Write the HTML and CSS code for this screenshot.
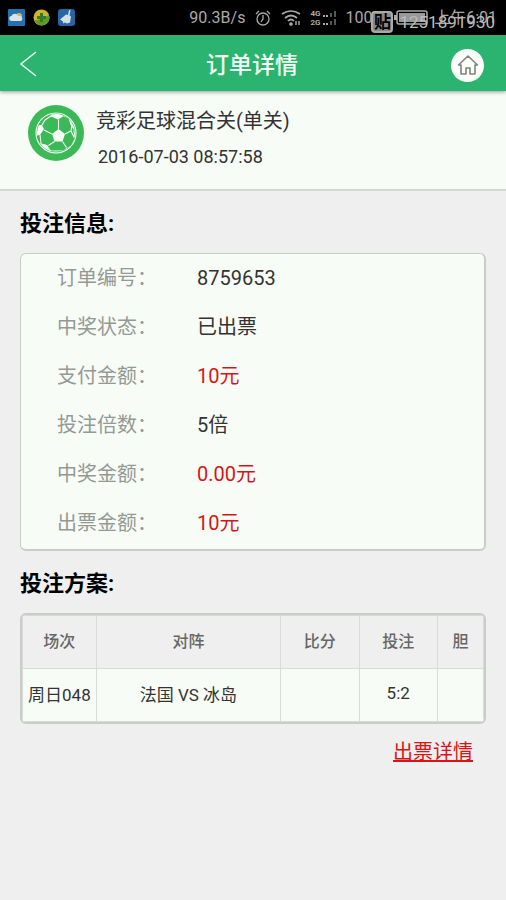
FILE: index.html
```html
<!DOCTYPE html>
<html lang="zh-CN">
<head>
<meta charset="utf-8">
<meta name="viewport" content="width=device-width, initial-scale=1">
<title>订单详情</title>
<link rel="stylesheet" href="styles.css">
</head>
<body>
<div class="status">
  <div class="status-apps">
    <svg width="17" height="17" viewBox="0 0 17 17" aria-hidden="true"><rect width="17" height="17" rx="1" fill="#2472ad"/><circle cx="11" cy="7" r="3" fill="#dfb34c"/><path d="M4 12a2.5 2.5 0 0 1-.5-5C5 4 9 4 10 7c3-.5 5 1 4 4l-1 1z" fill="#d9e3e8"/></svg>
    <svg width="17" height="17" viewBox="0 0 17 17" aria-hidden="true"><circle cx="8.5" cy="8.5" r="8" fill="#d0b52c"/><path d="M1 11C5 12 12 8 16 6a8 8 0 0 1-12 9z" fill="#5d9b31"/><path d="M7 4h3v3h3v3h-3v3H7v-3H4V7h3z" fill="#347b22"/></svg>
    <svg width="17" height="17" viewBox="0 0 17 17" aria-hidden="true"><rect width="17" height="17" rx="3" fill="#2865a4"/><path d="M11 1l1.500.500-1 5 1.500 1-1 6-3 1-2-1-2 1 0-2-3-2 6-5 2 .5z" fill="#d3e0e8"/></svg>
  </div>
  <div class="status-info">
    <span class="speed">90.3B/s</span>
    <svg class="alarm" width="16" height="18" viewBox="0 0 16 18" fill="none" stroke="#aaa" stroke-width="1.3" aria-hidden="true"><circle cx="8" cy="10" r="6"/><path d="M8 6v4l-2 3M1 5l3-3M15 5l-3-3"/></svg>
    <svg class="wifi" width="21" height="18" viewBox="0 0 21 18" fill="none" stroke="#aaa" stroke-width="1.7" aria-hidden="true"><path d="M1 5q9-6 18 0M4 9q6-5 12 0M7 12q3-3 6 0"/><circle cx="10" cy="15" r="1" fill="#aaa"/><path d="M15 12v4M18 12v4" stroke-width="1.4"/></svg>
    <span class="signal"><span class="nets"><b>4G</b><b>2G</b></span>
    <svg width="15" height="18" viewBox="0 0 15 18" aria-hidden="true"><path d="M1 6h2v2H1zM4 6h2v2H4zM1 14h2v2H1zM4 14h2v2H4z" fill="#aaa"/><path d="M8 4h2v4H8zM12 2h2v6h-2zM8 12h2v4H8zM12 10h2v6h-2z" fill="#555"/></svg></span>
    <span class="charge">100%</span>
    <svg class="battery" width="34" height="15" viewBox="0 0 34 15" aria-hidden="true"><rect x="3" y="1" width="30" height="13" rx="2" fill="none" stroke="#aaa" stroke-width="1.5"/><rect x="5" y="3" width="26" height="9" fill="#999"/><path d="M0 5h3v5H0z" fill="#aaa"/></svg>
    <span class="clock">上午6:01</span>
  </div>
  <div class="mark"><span class="mark-badge">贴</span><span class="mark-id">1251891930</span></div>
</div>
<header class="bar">
  <button class="bar-button" type="button" aria-label="返回"><svg width="18" height="28" viewBox="0 0 18 28" fill="none" stroke="#eafff0" stroke-width="1.6" aria-hidden="true"><path d="M16 1L1 13 16 25"/></svg></button>
  <h1 class="bar-title">订单详情</h1>
  <a class="home" href="#" aria-label="首页"><svg width="22" height="22" viewBox="0 0 22 22" fill="none" stroke="#858080" stroke-width="1.6" stroke-linejoin="round" aria-hidden="true"><path d="M4 11H1.500L11 2l9.500 9H18v9h-5v-6H9v6H4z"/></svg></a>
</header>
<section class="game">
  <svg class="ball" width="56" height="56" viewBox="0 0 56 56" aria-hidden="true">
    <defs><clipPath id="ball-clip"><circle cx="28" cy="28" r="19"/></clipPath></defs>
    <circle cx="28" cy="28" r="28" fill="#3bb957"/>
    <circle cx="28" cy="28" r="20" fill="none" stroke="#f6fff6" stroke-width="1.1"/>
    <g clip-path="url(#ball-clip)" fill="#f6fff6">
      <path d="M30.500 24l6.500 5-2.500 7.500h-8L24 29z"/>
      <path d="M22 6h14v5l-6 3.500-7-3zM7 20l7 0 2 4-4 6-5 1zM12 38l7 2 4 6-3 4-10-7zM37 44l7-4 4 1-8 9-5-2zM42 14l5 3 3 9-4-1-4-6z"/>
      <path d="M30.500 24v-9.500M37 29l6-3 1-6M34.500 36.500l4 6M26.500 36.500l-6 4M24 29l-8-4M23 11l-6 4-3 5M36 11l5 2 2 6M12 30l1 8M46 25l1 9-3 6M43 26l4 8M22 46h14" fill="none" stroke="#f6fff6" stroke-width="1.1"/>
    </g>
  </svg>
  <div class="game-text"><h2 class="game-name">竞彩足球混合关(单关)</h2><time class="game-time">2016-07-03 08:57:58</time></div>
</section>
<main class="content">
  <h2 class="heading">投注信息:</h2>
  <dl class="card">
    <div class="row"><dt>订单编号：</dt><dd>8759653</dd></div>
    <div class="row"><dt>中奖状态：</dt><dd>已出票</dd></div>
    <div class="row"><dt>支付金额：</dt><dd class="red">10元</dd></div>
    <div class="row"><dt>投注倍数：</dt><dd>5倍</dd></div>
    <div class="row"><dt>中奖金额：</dt><dd class="red">0.00元</dd></div>
    <div class="row"><dt>出票金额：</dt><dd class="red">10元</dd></div>
  </dl>
  <h2 class="heading">投注方案:</h2>
  <div class="plan">
    <table>
      <colgroup><col class="c-num"><col class="c-match"><col class="c-score"><col class="c-score"><col class="c-key"></colgroup>
      <thead><tr><th>场次</th><th>对阵</th><th>比分</th><th>投注</th><th>胆</th></tr></thead>
      <tbody><tr><td>周日048</td><td>法国 VS 冰岛</td><td></td><td>5:2</td><td></td></tr></tbody>
    </table>
  </div>
  <a class="detail" href="#">出票详情</a>
</main>
</body>
</html>
```
FILE: styles.css
```css
* { box-sizing: border-box; }
body {
  margin: 0;
  min-height: 100vh;
  background: #efefef;
  color: #333;
  font-family: Roboto, "Noto Sans CJK SC", sans-serif;
  font-size: 20px;
}
h1, h2, dl, dd { margin: 0; }
svg { display: block; flex: none; }

.status {
  position: relative;
  display: flex;
  justify-content: space-between;
  align-items: center;
  height: 35px;
  padding: 0 9px 0 8px;
  background: #000;
  color: #aaa;
  line-height: 20px;
  white-space: nowrap;
}
.status-apps { display: flex; gap: 8px; }
.status-info { display: flex; align-items: center; font-size: 16px; }
.alarm { margin-left: 10px; }
.wifi { margin-left: 10px; }
.signal { display: flex; gap: 2px; margin: 0 8px; }
.nets { display: flex; flex-direction: column; font-size: 8px; line-height: 9px; }
.battery { margin: 0 6px 0 10px; }
.mark {
  position: absolute;
  top: 11px;
  right: 11px;
  display: flex;
  align-items: center;
  gap: 6px;
  color: #bbb;
  font-size: 17px;
}
.mark-badge {
  width: 22px;
  border: 2px solid #aaa;
  border-radius: 4px;
  background: #888;
  color: #000;
  font-weight: 700;
  line-height: 18px;
  text-align: center;
}

.bar {
  position: relative;
  display: flex;
  justify-content: space-between;
  align-items: center;
  height: 56px;
  padding: 4px 22px 0 20px;
  background: #2ab46f;
  box-shadow: 0 1px 4px rgba(0, 0, 0, .4);
}
.bar-button { width: 33px; padding: 0; border: 0; background: none; }
.bar-title { padding-top: 2px; color: #f4fff6; font-size: 23px; line-height: 32px; font-weight: 500; }
.home {
  display: flex;
  align-items: center;
  justify-content: center;
  width: 33px;
  height: 33px;
  border-radius: 50%;
  background: #fafffa;
}

.game {
  display: flex;
  gap: 12px;
  height: 100px;
  padding: 14px 28px;
  border-bottom: 2px solid #d4d8d3;
  background: #f7fdf6;
}
.game-name { font-size: 20px; line-height: 32px; font-weight: 400; }
.game-time { display: block; margin: 4px 2px; font-size: 18px; line-height: 32px; }

.content { padding: 17px 20px; }
.heading { color: #000; font-size: 22px; line-height: 32px; font-weight: 700; }
.card {
  margin: 13px 0 17px;
  padding-bottom: 1px;
  border: 1px solid #c8cec7;
  border-width: 1px 2px 2px 1px;
  border-radius: 6px;
  background: #f7fdf6;
}
.row { display: flex; padding-left: 36px; line-height: 49px; }
dt { width: 140px; color: #949994; }
.red { color: #d71515; }

.plan {
  margin: 13px 0 12px;
  border: 2px solid #c8cec7;
  border-radius: 6px;
  overflow: hidden;
}
table { width: 100%; border-collapse: collapse; table-layout: fixed; }
th, td { height: 53px; padding: 0 0 4px; border: 1px solid #d8dbd7; text-align: center; white-space: nowrap; }
th { color: #666; font-size: 16px; font-weight: 500; }
td { background: #f7fdf6; font-size: 17px; }
.c-num { width: 16%; }
.c-match { width: 40%; }
.c-score { width: 17%; }
.c-key { width: 10%; }
.detail { display: block; width: max-content; margin: 0 13px 0 auto; color: #d71515; line-height: 32px; }
```
